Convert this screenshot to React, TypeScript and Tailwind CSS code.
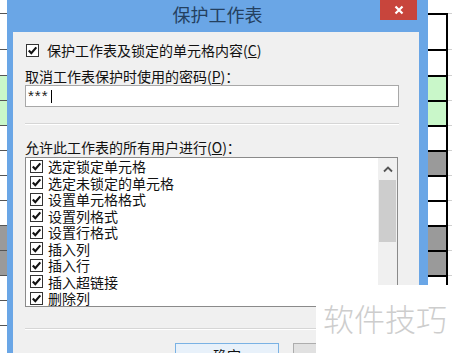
import React from 'react';

const cjk = { fontFamily: '"Noto Sans CJK SC", "Noto Sans", sans-serif' };

const rows = [
  { h: 'h-[13px]', fill: 'bg-white', top: false },
  { h: 'h-[36px]', fill: 'bg-white', top: true },
  { h: 'h-[26px]', fill: 'bg-white', top: true },
  { h: 'h-[25px]', fill: 'bg-[#c9f7c9]', top: true },
  { h: 'h-[25px]', fill: 'bg-[#c9f7c9]', top: true },
  { h: 'h-[25px]', fill: 'bg-white', top: true },
  { h: 'h-[25px]', fill: 'bg-[#9a9a9a]', top: true, rightOnly: true },
  { h: 'h-[25px]', fill: 'bg-white', top: true },
  { h: 'h-[25px]', fill: 'bg-white', top: true },
  { h: 'h-[25px]', fill: 'bg-[#9a9a9a]', top: true },
  { h: 'h-[25px]', fill: 'bg-[#9a9a9a]', top: true },
  { h: 'h-[25px]', fill: 'bg-white', top: true },
  { h: 'h-[25px]', fill: 'bg-white', top: true },
  { h: 'h-[28px]', fill: 'bg-white', top: true },
];

const permissions = [
  '选定锁定单元格',
  '选定未锁定的单元格',
  '设置单元格格式',
  '设置列格式',
  '设置行格式',
  '插入列',
  '插入行',
  '插入超链接',
  '删除列',
];

function Check() {
  return (
    <span className="w-[13px] h-[13px] shrink-0 border border-[#333] bg-white flex items-center justify-center">
      <svg width="11" height="11" viewBox="0 0 11 11">
        <path d="M1.8 5.6 L4.3 8.2 L9.3 2.4" fill="none" stroke="#111" strokeWidth="2.2" />
      </svg>
    </span>
  );
}

function Sheet() {
  return (
    <div className="flex w-full h-full">
      <div className="w-[7px] flex flex-col">
        {rows.map((r, i) => (
          <div
            key={i}
            className={`${r.h} ${r.rightOnly ? 'bg-white' : r.fill} ${r.top ? 'border-t border-[#555]' : ''}`}
          />
        ))}
      </div>
      <div className="flex-1" />
      <div className="w-[24px] flex flex-col">
        {rows.map((r, i) =>
          r.top ? (
            <div key={i} className={`${r.h} flex`}>
              <div className={`w-[18px] ${r.fill} border-t-2 border-black`} />
              <div className="w-[2px] bg-black" />
              <div className="flex-1 bg-white border-t border-[#d0d0d0]" />
            </div>
          ) : (
            <div key={i} className={`${r.h} bg-white`} />
          )
        )}
      </div>
    </div>
  );
}

export default function App() {
  return (
    <div className="relative w-[452px] h-[353px] overflow-hidden bg-white" style={cjk}>
      <Sheet />

      {/* dialog window */}
      <div className="absolute left-[7px] top-0 w-[421px] h-[390px] bg-[#6aa6e6] flex flex-col">
        <div className="relative h-[32px] flex items-start justify-center">
          <span className="mt-[2px] text-[18px] leading-[24px] text-[#24405f]">保护工作表</span>
          <div className="absolute right-[11px] top-0 w-[37px] h-[20px] bg-[#c8453c] flex items-center justify-center">
            <svg width="10" height="10" viewBox="0 0 10 10">
              <path d="M1.5 1.5 L8.5 8.5 M8.5 1.5 L1.5 8.5" stroke="#fff" strokeWidth="2.2" />
            </svg>
          </div>
        </div>

        <div className="flex-1 ml-[6px] mr-[9px] bg-[#f0f0f0] pl-[12px] pr-[20px] pt-[8px] flex flex-col text-[14px] text-[#111]">
          <div className="h-[20px] flex items-center gap-[8px]">
            <span className="ml-[1px]"><Check /></span>
            <span className="leading-[20px]">
              保护工作表及锁定的单元格内容(<span className="underline">C</span>)
            </span>
          </div>

          <div className="mt-[7px] h-[18px] leading-[18px]">
            取消工作表保护时使用的密码(<span className="underline">P</span>)：
          </div>

          <div className="h-[22px] border border-[#a8a8a8] bg-white flex items-center pl-[2px]">
            <span className="text-[15px] tracking-[1px] text-[#222]" style={{ fontFamily: '"Liberation Sans", sans-serif' }}>***</span>
            <span className="ml-[2px] w-px h-[13px] bg-black" />
          </div>

          <div className="mt-[16px] h-px bg-[#d6d6d6]" />
          <div className="h-px bg-white" />

          <div className="mt-[13px] h-[18px] leading-[18px]">
            允许此工作表的所有用户进行(<span className="underline">O</span>)：
          </div>

          <div className="mt-[1px] mr-[1px] h-[150px] border border-[#8a8a8a] bg-white flex overflow-hidden">
            <div className="flex-1 flex flex-col pl-[4px]">
              {permissions.map((p) => (
                <div key={p} className="h-[16.5px] shrink-0 flex items-center gap-[5px]">
                  <Check />
                  <span className="leading-[16px]">{p}</span>
                </div>
              ))}
            </div>
            <div className="w-[19px] bg-[#f0f0f0] flex flex-col items-center">
              <div className="h-[22px] w-full flex items-center justify-center">
                <svg width="10" height="7" viewBox="0 0 10 7">
                  <path d="M1 5.5 L5 1.5 L9 5.5" fill="none" stroke="#555" strokeWidth="1.8" />
                </svg>
              </div>
              <div className="w-[17px] h-[62px] bg-[#cdcdcd]" />
            </div>
          </div>

          <div className="mt-[21px] h-px bg-[#d6d6d6]" />
          <div className="h-px bg-white" />

          <div className="mt-[13px] ml-[150px] flex gap-[14px]">
            <div className="w-[104px] h-[24px] border border-[#7ab2e4] bg-[#e8f1fa] flex items-start justify-center pt-[2px]">
              <span className="leading-[18px]">确定</span>
            </div>
            <div className="w-[104px] h-[24px] border border-[#adadad] bg-[#e1e1e1]" />
          </div>
        </div>
      </div>

      {/* watermark */}
      <div className="absolute left-[316px] top-[285px] right-0 bottom-0 bg-white pl-[7px] pt-[17px]">
        <span className="text-[31px] leading-[31px] font-light text-[#cdcdcd] whitespace-nowrap">软件技巧</span>
      </div>
    </div>
  );
}
